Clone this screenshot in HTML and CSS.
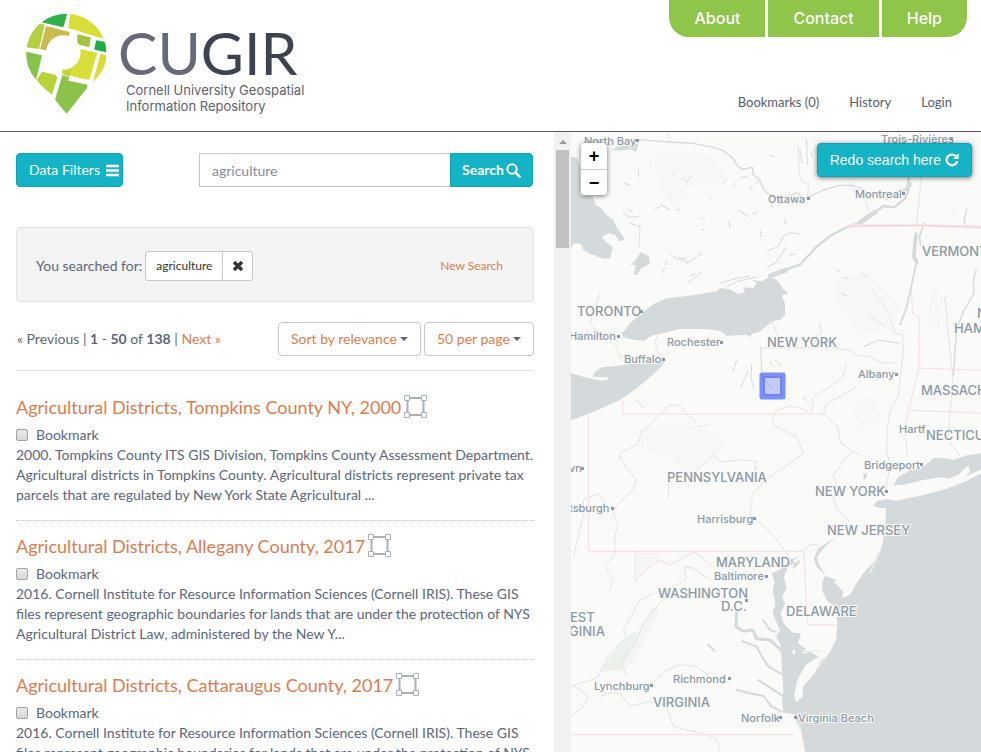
FILE: index.html
```html
<!DOCTYPE html>
<html lang="en">
<head>
<meta charset="utf-8">
<title>CUGIR - agriculture</title>
<link rel="stylesheet" href="styles.css">
</head>
<body>
<header class="site-header">
  <a class="brand" href="#">
    <svg class="brand-pin" viewBox="72 36 252 310" aria-hidden="true">
      <defs><clipPath id="pin"><path d="M78 161A121 120 0 0 1 320 161C320 212 288 238 260 266L200 342L116 248C92 224 78 196 78 161Z"/></clipPath></defs>
      <g clip-path="url(#pin)">
        <path fill="#2fb14a" d="M124 67L160 40L203 36L190 82Z"/>
        <path fill="#d7de38" d="M212 30H330V122L205 84Z"/>
        <path fill="#b5cf42" d="M100 64L134 74L117 147L70 141Z"/>
        <path fill="#c9bb4c" d="M138 78L209 96L205 114L150 138L142 153L120 147Z"/>
        <path fill="#a3c541" d="M232 103L273 113L268 142L232 132Z"/>
        <path fill="#22ad4b" d="M289 121L326 128V159L283 149Z"/>
        <path fill="#86c34a" d="M70 153L126 167L108 240L70 220Z"/>
        <path fill="#d7de38" d="M238 147L292 159L268 241L222 231L190 214Z"/>
        <path fill="#c2d436" d="M186 205L215 205L210 231L188 224Z"/>
        <path fill="#d7de38" d="M302 162L326 168V230L279 246Z"/>
        <path fill="#b7d23a" d="M126 216L174 227L156 284L106 246Z"/>
        <path fill="#8bc34a" d="M187 226L207 232L205 243L262 255V275L200 345L165 300Z"/>
      </g>
      <circle cx="190" cy="158" r="52" fill="#fff"/>
      <path d="M182 200L174 232" stroke="#fff" stroke-width="12"/>
    </svg>
    <span class="brand-words">
      <span class="brand-name">CU<b>GIR</b></span>
      <span class="brand-sub">Cornell University Geospatial<br>Information Repository</span>
    </span>
  </a>
  <div class="header-side">
    <nav class="tabs"><a href="#">About</a><a href="#">Contact</a><a href="#">Help</a></nav>
    <nav class="user-links"><a href="#">Bookmarks (0)</a><a href="#">History</a><a href="#">Login</a></nav>
  </div>
</header>

<main class="columns">
  <section class="results">
    <form class="search-row">
      <button type="button" class="btn filters">Data Filters
        <svg width="13" height="13" viewBox="0 0 13 13" aria-hidden="true"><path d="M0 2H13M0 6.5H13M0 11H13" stroke="#fff" stroke-width="2.4"/></svg>
      </button>
      <div class="search-group">
        <input type="text" value="agriculture" aria-label="Search">
        <button type="submit" class="btn search">Search
          <svg width="15" height="15" viewBox="0 0 15 15" aria-hidden="true"><circle cx="6" cy="6" r="4.7" fill="none" stroke="#fff" stroke-width="2"/><path d="M9.5 9.5L13.6 13.6" stroke="#fff" stroke-width="2.6" stroke-linecap="round"/></svg>
        </button>
      </div>
    </form>

    <div class="well">
      <span class="well-label">You searched for:</span>
      <span class="chip"><span class="chip-text">agriculture</span><button type="button" aria-label="Remove agriculture"><svg width="12" height="12" viewBox="0 0 12 12" aria-hidden="true"><path d="M2 2L10 10M10 2L2 10" stroke="#333" stroke-width="3.4"/></svg></button></span>
      <a class="new-search" href="#">New Search</a>
    </div>

    <div class="toolbar">
      <div class="pages">« Previous | <b>1</b> - <b>50</b> of <b>138</b> | <a href="#">Next »</a></div>
      <div class="picks">
        <span class="pick"><select aria-label="Sort"><option>Sort by relevance</option></select><i class="caret"></i></span>
        <span class="pick"><select aria-label="Results per page"><option>50 per page</option></select><i class="caret"></i></span>
      </div>
    </div>

    <svg class="defs" width="0" height="0" aria-hidden="true"><symbol id="bbox" viewBox="0 0 23 23"><path d="M4 3H19M4 20H19" stroke="#a9b2bc" stroke-width="2"/><path d="M3.500 4V19M19.500 4V19" stroke="#a9b2bc" stroke-width="2"/><g fill="#fff" stroke="#a9b2bc"><path d="M.500.500h5v5h-5zM17.500.500h5v5h-5zM.500 17.500h5v5h-5zM17.500 17.500h5v5h-5z"/></g></symbol></svg>

    <article>
      <h2><a href="#">Agricultural Districts, Tompkins County NY, 2000</a> <svg class="bbox" aria-hidden="true"><use href="#bbox"/></svg></h2>
      <label><input type="checkbox">Bookmark</label>
      <p>2000. Tompkins County ITS GIS Division, Tompkins County Assessment Department. Agricultural districts in Tompkins County. Agricultural districts represent private tax parcels that are regulated by New York State Agricultural ...</p>
    </article>
    <article>
      <h2><a href="#">Agricultural Districts, Allegany County, 2017</a> <svg class="bbox" aria-hidden="true"><use href="#bbox"/></svg></h2>
      <label><input type="checkbox">Bookmark</label>
      <p>2016. Cornell Institute for Resource Information Sciences (Cornell IRIS). These GIS files represent geographic boundaries for lands that are under the protection of NYS Agricultural District Law, administered by the New Y...</p>
    </article>
    <article>
      <h2><a href="#">Agricultural Districts, Cattaraugus County, 2017</a> <svg class="bbox" aria-hidden="true"><use href="#bbox"/></svg></h2>
      <label><input type="checkbox">Bookmark</label>
      <p>2016. Cornell Institute for Resource Information Sciences (Cornell IRIS). These GIS files represent geographic boundaries for lands that are under the protection of NYS Agricultural District Law, administered by the New Y...</p>
    </article>
  </section>
  <div class="scrollbar" aria-hidden="true"><i class="up"></i><i class="thumb"></i></div>

  <section class="map" aria-label="Map">
    <svg class="map-art" role="img" aria-label="Map of the north-eastern United States">
      <g transform="translate(-1 -2) scale(.33333)">
        <g fill="#f7f8f6">
          <path d="M250 80L330 60L420 80L470 130L440 160L350 170L320 230L270 190Z"/>
          <path d="M800 440L900 430L990 520L970 600L870 610L800 520Z"/>
          <path d="M210 900L280 880L400 890L470 940L430 1000L350 1020L270 970L215 960Z"/>
          <path d="M860 810L910 800L930 860L880 900L850 850Z"/>
          <path d="M1080 460L1120 500L1110 600L1075 590Z"/>
        </g>
        <path fill="#f2f5f1" d="M150 1625L185 1530L250 1430L270 1440L230 1520L190 1600Z"/>
        <path fill="#ecf1ec" d="M92 1625L120 1580L160 1530L195 1505L205 1520L160 1600L150 1620Z"/>
        <path fill="#f5f5f3" d="M200 1270L290 1270L250 1300L200 1340Z"/>
        <g fill="#d4dadc">
          <path d="M0 78L22 84L30 110V195L68 200L80 228L92 232L110 255L130 270L138 288L165 328L150 334L135 315L118 310L96 320L105 334L128 352L120 385L100 386L62 372L40 360L34 342L12 340L0 356Z"/>
          <path d="M112 72L140 50L180 36L205 42L198 66L180 58L150 62L130 60Z"/>
          <path d="M212 366L236 378L240 402L215 414L200 436L192 434L196 404L180 406L200 386Z"/>
          <path d="M155 612L180 580L212 552L250 522L290 505L370 496L440 484L450 474L480 478L505 492L525 486L520 472L550 474L560 458L545 450L575 454L600 440L620 450L640 478L656 490L635 496L645 520L645 555L630 570L608 573L570 605L545 612L542 622L530 614L470 618L452 604L435 600L390 597L330 597L258 614L235 622L225 632L190 629L160 622Z"/>
          <path d="M0 729L30 738L60 745L90 752L113 750L113 742L68 740L75 725L95 712L140 708L180 702L240 692L285 686L280 704L240 742L200 775L156 806L110 828L60 850L0 873Z"/>
          <path d="M1233 970L1190 976L1150 990L1125 985L1090 984L1060 1010L1022 1020L985 1040L970 1065L1000 1064L1060 1050L1110 1042L1135 1046L1165 1034L1180 1020L1195 1006L1200 1025L1185 1040L1233 1018Z"/>
          <path d="M1233 1030L1190 1052L1130 1076L1060 1095L980 1112L950 1108L920 1113L910 1128L930 1134L948 1134L946 1180L938 1240L915 1290L880 1330L858 1362L840 1395L815 1404L820 1385L792 1357L800 1350L770 1340L740 1310L732 1285L745 1255L770 1238L800 1222L768 1246L740 1282L748 1305L766 1336L756 1360L758 1385L772 1412L798 1434L802 1480L798 1530L776 1572L752 1592L735 1630L700 1668L697 1700L680 1716L672 1700L682 1650L706 1606L745 1580L720 1566L695 1572L708 1556L684 1540L693 1510L668 1508L642 1482L632 1450L645 1420L636 1400L650 1375L642 1340L654 1310L690 1290L688 1302L668 1318L672 1290L690 1278L660 1288L632 1318L605 1330L614 1354L608 1380L616 1420L608 1450L622 1482L630 1502L618 1520L632 1545L636 1620L640 1680L636 1712L640 1748L672 1752L690 1800L706 1870H1233Z"/>
          <path d="M880 1032L892 1028L890 1042L880 1052Z"/>
        </g>
        <g fill="#fafaf8"><path d="M666 1562l8-6l2 14l-6 4zM656 1455l10 8l-6 4z"/></g>
        <g fill="none" stroke="#d4dadc" stroke-linecap="round" stroke-linejoin="round">
          <path stroke-width="11" d="M1038 312L1034 350L1032 380L1040 396"/>
          <path stroke-width="5" d="M1062 280L1048 320L1052 346M1040 396L1032 430L1024 470L1010 530L990 585"/>
          <path stroke-width="4" d="M1190 238L1182 270L1190 292M1218 420L1210 450L1212 490L1180 545L1160 600L1156 650L1150 735"/>
          <path stroke-width="14" d="M600 438L648 420"/>
          <path stroke-width="7" d="M640 422L690 404L740 350L780 318L830 292L870 278"/>
          <path stroke-width="14" d="M870 277L892 262L916 246"/>
          <path stroke-width="7" d="M916 246L940 228L972 232L1006 205L1022 160M950 208L965 190L1010 178L1018 140"/>
          <path stroke-width="9" d="M500 1445L498 1490L520 1504L548 1500L560 1526L600 1530L635 1562"/>
          <path stroke-width="6" d="M518 1534L560 1550L576 1580L596 1610L634 1632M565 1650L590 1666L636 1696M500 1680L540 1690L580 1698L605 1730L636 1745M580 1470L600 1500L618 1505M415 1545L434 1562"/>
          <path stroke-width="3" d="M500 690L488 725M535 722L512 772M545 705L543 745L552 778M572 650L575 720M600 695L607 706M616 690L632 708M196 807L220 832M574 722L604 766M882 650L925 630L990 640M700 800L720 820"/>
          <path stroke-width="3" d="M285 412L275 430M290 394L286 404M355 458L396 424M300 370L320 388L345 385L350 400L395 370M325 378L340 396M450 460L500 445L540 438M470 470L500 455L560 440M590 412L618 398L650 350M590 362L625 350L640 318L662 308L688 312M600 222L612 232M505 240L535 260M475 275L480 292M548 252L560 248M418 198L424 206M340 145L350 158L362 140M312 132L306 136M162 160L180 166M254 240L276 226L300 240M160 245L175 262L205 260M180 280L210 290M176 240L186 246M460 160L470 150M490 158L492 168M538 178L548 172M560 148L566 158M515 142L530 140M330 240L320 238M395 262L402 270M396 300L404 298M646 266L646 282M205 120L206 140M598 76L614 80M570 300L574 320M710 28L712 105M690 60L696 100M722 66L728 82M820 442L835 446M880 430L886 438M800 420L808 424M815 490L835 500M1145 238L1150 240M360 438L376 430M140 320L150 330M660 375L675 372"/>
        </g>
        <g fill="none" stroke="#e3e3e5" stroke-width="3" stroke-linejoin="round">
          <path stroke="#d8d9df" stroke-width="4" d="M195 28L240 32L300 36L370 40L430 52L460 62L492 88L502 108L518 118L548 112L548 134L566 144L582 180L606 200L650 204L680 186L704 206L760 180L808 166L848 166L880 178"/>
          <path d="M290 10L302 32M685 48L688 140L716 170L712 202M840 160L855 188L890 220L895 244M1060 66L1054 140L1048 200L1040 280M210 280L208 350M90 490L76 530L60 580L90 610L140 650L150 680L196 688M606 573L620 610L640 640M750 580L755 610L720 630L800 655L840 660L860 676L900 680L940 700L980 698M905 480L930 510L960 560L975 610L998 615L1000 660L985 800L960 840L952 900M1124 500L1148 740L1134 930L1170 978M828 700L820 740L780 770L730 800L724 850M858 770L810 800L770 820L760 850M900 560L950 590M620 840L606 870L618 890L680 920L700 970L660 1000L590 1046L560 1080L540 1100L548 1120L538 1150L560 1170L610 1215L650 1270L668 1290M620 840L660 828L705 838L720 854M760 850L802 890L812 940L850 965L880 980M850 965L830 980L790 1035L800 1070L790 1105L802 1140L840 1176M300 825L330 826L350 850L390 890L416 884M300 825L270 850L240 885L215 900L205 940L150 970L152 990L198 1050L190 1080L140 1125L130 1150L145 1180L134 1220L134 1270L106 1310L130 1350L120 1378M294 1106L296 1050L380 1022L430 972L450 996L510 990L560 994L548 1060M40 1110L86 1090L110 1130L130 1130M40 1110L42 1150L10 1280M952 900L950 960L960 1010L946 1080M1005 890L1012 980M345 1310L370 1315L420 1350M345 1310L348 1350L290 1380M240 1665L290 1620L330 1604L380 1610L420 1640L480 1660M90 1700L120 1688L150 1690L180 1728L240 1715L290 1730L310 1790L350 1800L400 1810L440 1830L450 1860M10 1665L30 1680L55 1700L40 1730L0 1760"/>
          <path d="M250 1390L210 1410L160 1500L170 1520L120 1570L90 1625M300 1380L270 1420L220 1480L200 1530L155 1600L170 1640"/>
        </g>
        <g fill="none" stroke="#f0dfe1" stroke-width="3">
          <path stroke="#f7e8e9" stroke-width="9" d="M832 288L1040 286L1233 292"/>
          <path stroke="#ecd3d6" d="M832 288L1040 286L1233 292"/>
          <path d="M260 616L256 640L262 665L285 686M158 808V852H760M56 856V1264H700L720 1244L748 1243M196 1264V1352L240 1310L270 1290L300 1304L372 1266L400 1286L430 1312M702 1264L712 1485H800M700 1565L755 1562M1028 550L1048 560L1046 714L1016 842L1005 890M1046 714L1140 718L1233 720M1016 842L1130 844L1233 850M1028 550L1024 480M0 1670L50 1655L86 1640L92 1625M0 1814H670M573 655L760 652"/>
        </g>
        <path fill="none" stroke="#fafaf8" stroke-width="3" d="M745 1612L782 1560M688 1780L704 1866M900 1330L935 1250"/>
      </g>

      <g transform="translate(-571 -132)" class="labels">
        <g class="city">
          <text x="584" y="145">North Bay</text><text x="881" y="143">Trois-Rivières</text><text x="768" y="203">Ottawa</text><text x="855" y="198">Montreal</text>
          <text x="569" y="340">Hamilton</text><text x="667" y="346">Rochester</text><text x="624" y="363">Buffalo</text><text x="858" y="378">Albany</text>
          <text x="899" y="433">Hartf</text><text x="864" y="469">Bridgeport</text><text x="569" y="472">vn</text><text x="569" y="512">tsburgh</text><text x="697" y="523">Harrisburg</text>
          <text x="714" y="580">Baltimore</text><text x="594" y="690">Lynchburg</text><text x="673" y="683">Richmond</text><text x="741" y="722">Norfolk</text><text x="798" y="722">Virginia Beach</text>
        </g>
        <g class="state">
          <text x="577" y="316">TORONTO</text><text x="922" y="256">VERMONT</text><text x="767" y="347">NEW YORK</text><text x="977" y="318">NEW</text><text x="954" y="333">HAMPSHIRE</text>
          <text x="921" y="395">MASSACHUSETTS</text><text x="926" y="440">NECTICUT</text><text x="667" y="482">PENNSYLVANIA</text><text x="815" y="496">NEW YORK</text><text x="827" y="535">NEW JERSEY</text>
          <text x="716" y="567">MARYLAND</text><text x="658" y="598">WASHINGTON</text><text x="721" y="611">D.C.</text><text x="786" y="616">DELAWARE</text>
          <text x="570" y="622">EST</text><text x="569" y="636">GINIA</text><text x="653" y="707">VIRGINIA</text>
        </g>
        <path class="dots" d="M636 139h3v3h-3zM950 137h3v3h-3zM807 197h3v3h-3zM902 192h3v3h-3zM640 310h3v3h-3zM617 335h3v3h-3zM720 341h3v3h-3zM662 358h3v3h-3zM895 373h3v3h-3zM920 463h3v3h-3zM581 467h3v3h-3zM611 507h3v3h-3zM885 490h3v3h-3zM753 517h3v3h-3zM765 575h3v3h-3zM745 599h3v3h-3zM650 684h3v3h-3zM728 677h3v3h-3zM779 716h3v3h-3zM794 716h3v3h-3z"/>
        <rect x="762" y="375" width="21" height="22" fill="#c4cbf3" stroke="#7b8fff" stroke-width="5" stroke-linejoin="round"/>
        <rect x="764" y="377" width="17" height="18" fill="none" stroke="#7083f5" stroke-width="2"/>
        <path d="M766 381L771 388" stroke="#aab4e4" fill="none"/>
      </g>
    </svg>
    <div class="zoom"><button type="button" aria-label="Zoom in">+</button><button type="button" aria-label="Zoom out">−</button></div>
    <button type="button" class="btn redo">Redo search here
      <svg width="14" height="14" viewBox="0 0 14 14" aria-hidden="true"><path d="M11.300 3.600A5.400 5.400 0 1 0 12.300 8" fill="none" stroke="#fff" stroke-width="2.200"/><path d="M13.600.300V6H8Z" fill="#fff"/></svg>
    </button>
  </section>
</main>
</body>
</html>
```

FILE: styles.css
```css
* { box-sizing: border-box; }
body {
  margin: 0;
  height: 100vh;
  display: flex;
  flex-direction: column;
  overflow: hidden;
  background: #fff;
  color: #5b667b;
  font: 14px/20px Lato, "Liberation Sans", sans-serif;
}
a { color: #df7c4e; text-decoration: none; }
button, input, select { font: inherit; margin: 0; }

.site-header {
  flex: none;
  display: flex;
  justify-content: space-between;
  align-items: flex-start;
  height: 132px;
  border-bottom: 1px solid #56595f;
}
.brand { display: flex; gap: 13px; padding: 12px 0 0 24px; color: #5d616d; }
.brand-pin { width: 84px; height: 103px; }
.brand-words { display: flex; flex-direction: column; padding-top: 12px; }
.brand-name { font-size: 59px; line-height: 58px; color: #656978; margin-left: -3px; }
.brand-name b { font-weight: 400; color: #3d4350; }
.brand-sub { font-family: Inter, sans-serif; font-size: 13px; line-height: 16px; padding-left: 5px; }

.header-side { display: flex; flex-direction: column; align-items: flex-end; gap: 55px; }
.tabs { display: flex; gap: 3px; margin-right: 14px; border-radius: 0 0 20px 20px; overflow: hidden; }
.tabs a {
  padding: 8px 25px;
  height: 37px;
  background: #8fc549;
  color: #fff;
  font: 500 16px/20px Inter, sans-serif;
}
.user-links { display: flex; gap: 30px; padding-right: 29px; font-size: 13px; }
.user-links a { color: #565c6e; }

.columns { flex: 1; min-height: 0; display: grid; grid-template-columns: minmax(0, 554fr) 17px minmax(0, 410fr); }
.results { overflow: hidden; padding: 21px 20px 0 16px; }

.btn {
  display: inline-flex;
  align-items: center;
  justify-content: center;
  gap: 5px;
  height: 34px;
  padding: 0 11px;
  border: 1px solid #12a3b3;
  border-radius: 4px;
  background: #14b4c6;
  color: #fff;
}
.search-row { display: flex; justify-content: space-between; gap: 76px; padding-right: 1px; }
.filters { gap: 6px; padding: 0 3px 0 12px; }
.search-group { display: flex; flex: 1; min-width: 0; }
.search-group input {
  flex: 1;
  min-width: 0;
  height: 34px;
  padding: 0 12px;
  border: 1px solid #c4c4c4;
  border-right: 0;
  border-radius: 0;
  color: #868e9f;
}
.search { gap: 2px; border-radius: 0 4px 4px 0; font-weight: 700; }

.well {
  display: flex;
  align-items: center;
  gap: 3px;
  margin-top: 40px;
  padding: 23px 30px 20px 19px;
  border: 1px solid #e1e1e1;
  border-radius: 4px;
  background: #f4f4f4;
}
.chip { display: flex; height: 30px; border: 1px solid #c8c8c8; border-radius: 3px; background: #fff; color: #333; font-size: 12px; line-height: 28px; }
.chip-text { padding: 0 10px; }
.chip button { display: grid; place-items: center; width: 30px; padding: 0; border: 0; border-left: 1px solid #c8c8c8; background: none; }
.new-search { margin-left: auto; font-size: 12px; }

.toolbar { display: flex; justify-content: space-between; align-items: center; margin: 20px 0 11px; padding-bottom: 14px; border-bottom: 1px solid #dcdcdc; }
.pages { padding-left: 1px; }
.pages b { font-weight: 700; }
.picks { display: flex; gap: 3px; }
.pick { display: flex; align-items: center; gap: 2px; height: 34px; padding: 0 12px; border: 1px solid #c8c8c8; border-radius: 4px; }
.pick select { appearance: none; padding: 0; border: 0; background: none; color: #df7c4e; }
.caret { border: 4px solid transparent; border-top-color: #5b667b; border-bottom: 0; }

.defs { position: absolute; }
article { padding: 13px 0 15px; border-bottom: 1px dotted #c6c6c6; }
h2 { display: flex; align-items: center; gap: 3px; margin: 0 0 5px; font-size: 18px; line-height: 25px; font-weight: 400; }
.bbox { width: 23px; height: 23px; margin-bottom: 2px; }
article label { display: flex; align-items: center; gap: 8px; }
article input { appearance: none; width: 12px; height: 12px; border: 1px solid #a3a3a3; border-radius: 2px; background: linear-gradient(#e9e9e9, #d8d8d8); }
article p { margin: 0; }

.scrollbar { display: flex; flex-direction: column; align-items: center; gap: 6px; padding-top: 8px; background: #f1f1f1; }
.up { border: 4px solid transparent; border-bottom-color: #9a9a9a; border-top: 0; }
.thumb { width: 13px; height: 98px; background: #c1c1c1; }

.map { position: relative; overflow: hidden; background: #fafaf8; }
.map-art { display: block; width: 100%; height: 100%; }
.labels text { fill: #8b99a6; stroke: #fafaf8; stroke-width: 2px; paint-order: stroke; font-family: Inter, sans-serif; font-weight: 500; }
.labels .city text { font-size: 11px; }
.labels .state text { font-size: 13px; }
.dots { fill: #8b99a6; }
.zoom { position: absolute; left: 10px; top: 11px; width: 26px; border-radius: 4px; background: #fff; box-shadow: 0 1px 5px rgba(0, 0, 0, .55); }
.zoom button { display: block; width: 26px; height: 26px; padding: 0; border: 0; background: none; color: #000; font: bold 18px/26px "Liberation Sans", sans-serif; }
.zoom button + button { border-top: 1px solid #ccc; }
.redo { position: absolute; right: 9px; top: 11px; gap: 4px; padding: 0 12px; font: 14px "Liberation Sans", sans-serif; box-shadow: 0 1px 5px rgba(0, 0, 0, .55); }
```
